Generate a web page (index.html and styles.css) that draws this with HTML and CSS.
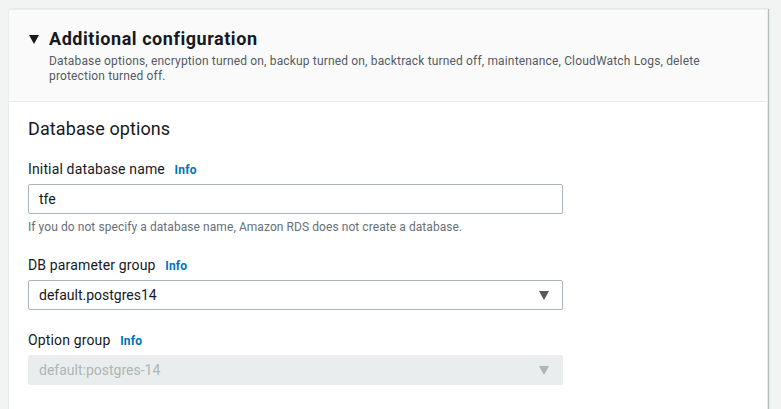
FILE: index.html
```html
<!DOCTYPE html>
<html lang="en">
<head>
<meta charset="utf-8">
<title>Additional configuration</title>
<link rel="stylesheet" href="styles.css">
</head>
<body>
<div class="panel">
  <div class="panel-header">
    <div class="title-row">
      <span class="caret"></span>
      <h2 class="title">Additional configuration</h2>
    </div>
    <p class="desc">Database options, encryption turned on, backup turned on, backtrack turned off, maintenance, CloudWatch Logs, delete protection turned off.</p>
  </div>
  <div class="panel-body">
    <h3 class="section-title">Database options</h3>

    <div class="field">
      <label class="label">Initial database name <span class="info">Info</span></label>
      <div class="input">tfe</div>
      <p class="hint">If you do not specify a database name, Amazon RDS does not create a database.</p>
    </div>

    <div class="field">
      <label class="label">DB parameter group <span class="info">Info</span></label>
      <div class="select">
        <span>default.postgres14</span>
        <span class="arrow"></span>
      </div>
    </div>

    <div class="field last">
      <label class="label">Option group <span class="info">Info</span></label>
      <div class="select disabled">
        <span>default:postgres-14</span>
        <span class="arrow"></span>
      </div>
    </div>
  </div>
</div>
</body>
</html>
```

FILE: styles.css
```css
html, body {
  margin: 0;
  padding: 0;
}
body {
  background: #f2f3f3;
  font-family: Roboto, "Liberation Sans", Arial, sans-serif;
  color: #16191f;
  padding: 9px 0 0 8px;
  height: 400px;
  overflow: hidden;
}
.panel {
  box-sizing: border-box;
  width: 760px;
  height: 400px;
  background: #ffffff;
  border: 1px solid #eaeded;
  border-bottom: none;
  box-shadow: 1px 0 1px rgba(0, 28, 36, 0.25);
}
.panel-header {
  background: #fafafa;
  border-bottom: 1px solid #eaeded;
  padding: 18px 20px 17px 20px;
}
.title-row {
  display: flex;
  align-items: center;
  gap: 10px;
}
.caret {
  width: 0;
  height: 0;
  border-left: 5px solid transparent;
  border-right: 5px solid transparent;
  border-top: 9px solid #16191f;
}
.title {
  margin: 0;
  font-size: 18px;
  line-height: 22px;
  font-weight: 700;
  letter-spacing: 0.55px;
}
.desc {
  margin: 4px 0 0 20px;
  font-size: 12px;
  line-height: 15px;
  color: #545b64;
  letter-spacing: 0.16px;
  width: 680px;
}
.panel-body {
  padding: 16px 20px 0 19px;
}
.section-title {
  margin: 0 0 19px 0;
  font-size: 18px;
  line-height: 22px;
  font-weight: 400;
  letter-spacing: 0.1px;
}
.field {
  width: 535px;
  margin-bottom: 20px;
}
.field.last {
  margin-bottom: 0;
}
.label {
  display: block;
  font-size: 14px;
  line-height: 20px;
  margin-bottom: 4px;
  letter-spacing: 0.15px;
}
.info {
  color: #0073bb;
  font-size: 12px;
  font-weight: 700;
  margin-left: 6px;
  letter-spacing: 0.2px;
}
.input, .select {
  box-sizing: border-box;
  height: 30px;
  border: 1px solid #aab7b8;
  border-radius: 2px;
  padding: 0 10px;
  font-size: 14px;
  display: flex;
  align-items: center;
}
.select {
  justify-content: space-between;
  padding-right: 13px;
}
.arrow {
  width: 0;
  height: 0;
  border-left: 5px solid transparent;
  border-right: 5px solid transparent;
  border-top: 9px solid #545b64;
}
.select.disabled {
  background: #eaeded;
  border-color: #eaeded;
  color: #aab7b8;
}
.select.disabled .arrow {
  border-top-color: #aab7b8;
}
.hint {
  margin: 5px 0 0 0;
  font-size: 12px;
  line-height: 16px;
  color: #687078;
  letter-spacing: 0.07px;
}
```
